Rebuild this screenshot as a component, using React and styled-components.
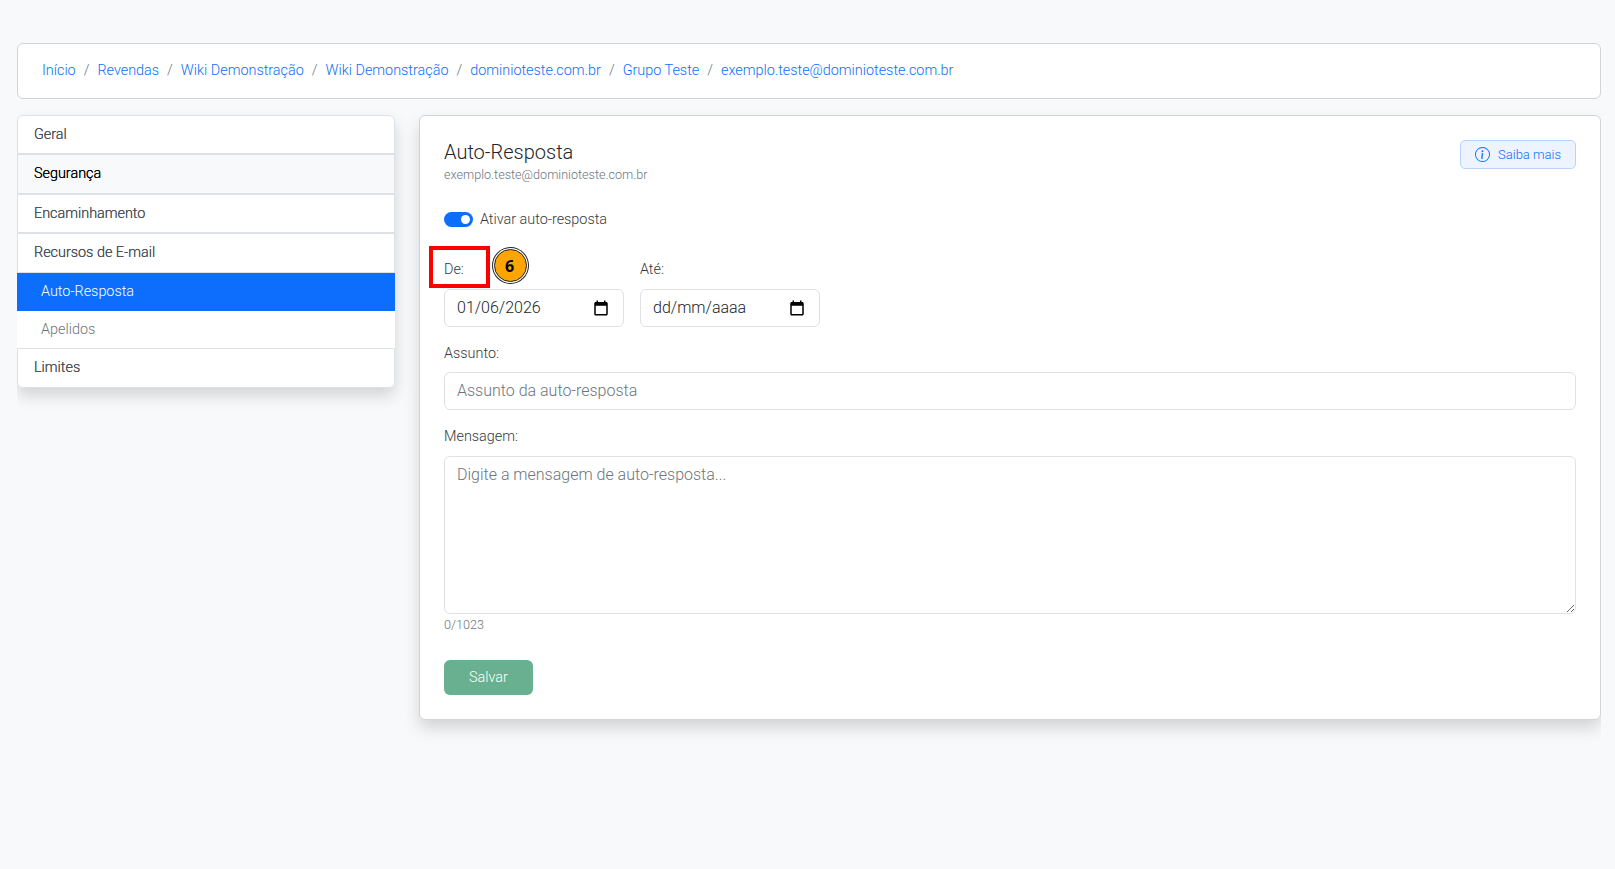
import styled, { createGlobalStyle } from "styled-components";
import { BsInfoCircle } from "react-icons/bs";

const GlobalStyle = createGlobalStyle`
  * {
    box-sizing: border-box;
  }
  body {
    margin: 0;
    background-color: #f8f9fa;
    color: #212529;
    font-family: Roboto, "Liberation Sans", sans-serif;
    font-size: 14.4px;
    line-height: 1.5;
    font-weight: 300;
  }
`;

const Page = styled.div`
  padding: 43px 14px 0 17px;
  min-height: 869px;
`;

const Breadcrumb = styled.nav`
  display: flex;
  align-items: center;
  padding: 16px 24px;
  margin-bottom: 16px;
  background: #fff;
  border: 1px solid #d3d4d5;
  border-radius: 6px;
`;

const Crumb = styled.a`
  color: #0d6efd;
  text-decoration: none;
`;

const CrumbSeparator = styled.span`
  padding: 0 8px;
  color: #6c757d;
`;

const Columns = styled.div`
  display: grid;
  grid-template-columns: 378px 1fr;
  gap: 24px;
  align-items: start;
  overflow-x: clip;
`;

const SideMenu = styled.ul`
  margin: 0;
  padding: 0;
  list-style: none;
  background: #fff;
  border-radius: 6px;
  box-shadow: 0 8px 16px rgba(0, 0, 0, 0.15);
`;

const MenuItem = styled.li`
  padding: 8px 16px;
  border: 1px solid #dee2e6;
  color: ${(props) => (props.$active ? "#000" : "#495057")};
  text-shadow: 0 0 0.6px ${(props) => (props.$active ? "#000" : "#495057")};
  background: ${(props) => (props.$active ? "#f8f9fa" : "#fff")};

  &:first-child {
    border-radius: 6px 6px 0 0;
  }
  &:last-child {
    border-radius: 0 0 6px 6px;
  }
`;

const SubItem = styled.li`
  padding: 8px 24px;
  color: ${(props) => (props.$active ? "#fff" : "#6c757d")};
  background: ${(props) => (props.$active ? "#0d6efd" : "#fff")};
`;

const Card = styled.section`
  padding: 24px;
  background: #fff;
  border: 1px solid #d3d4d5;
  border-radius: 6px;
  box-shadow: 0 8px 16px rgba(0, 0, 0, 0.15);
`;

const CardHeader = styled.header`
  display: flex;
  justify-content: space-between;
  align-items: flex-start;
  margin-bottom: 25px;
`;

const Title = styled.h2`
  margin: 0;
  font-size: 20px;
  font-weight: 300;
  line-height: 24px;
`;

const Subtitle = styled.div`
  font-size: 12.6px;
  line-height: 19px;
  margin-top: 1px;
  color: #6c757d;
`;

const LearnMore = styled.button`
  display: flex;
  align-items: center;
  gap: 8px;
  height: 29px;
  padding: 1px 14px 0;
  background: #edf4ff;
  border: 1px solid #b9d4fc;
  border-radius: 5px;
  color: #0d6efd;
  font: inherit;
  font-size: 13px;
`;

const SwitchRow = styled.label`
  display: flex;
  align-items: center;
  gap: 7px;
  margin-bottom: 29px;
  color: #343a40;
`;

const SwitchTrack = styled.span`
  display: flex;
  justify-content: flex-end;
  align-items: center;
  width: 29px;
  height: 14.4px;
  padding: 2px 3px;
  background: #0d6efd;
  border-radius: 8px;
`;

const SwitchKnob = styled.span`
  width: 9px;
  height: 9px;
  background: #fff;
  border-radius: 50%;
`;

const DateRow = styled.div`
  display: flex;
  gap: 16px;
  margin-bottom: 16px;
`;

const DateField = styled.div`
  position: relative;
  width: 180px;
`;

const FieldLabel = styled.label`
  display: block;
  margin-bottom: 8px;
  color: #343a40;
`;

const DateBox = styled.div`
  display: flex;
  justify-content: space-between;
  align-items: center;
  height: 38px;
  padding: 0 13px 0 12px;
  border: 1px solid #dee2e6;
  border-radius: 6px;
  font-size: 16px;
  color: #212529;
`;

const Highlight = styled.div`
  position: absolute;
  left: -15px;
  top: -13px;
  width: 61px;
  height: 42px;
  border: 4px solid #f00;
`;

const StepBadge = styled.div`
  position: absolute;
  left: 49.5px;
  top: -10px;
  display: flex;
  justify-content: center;
  align-items: center;
  width: 33px;
  height: 33px;
  padding-right: 1px;
  background: #ffa500;
  border: 1px solid #222;
  border-radius: 50%;
  box-shadow: 0 0 0 1px #fff, 0 0 0 2px #222;
  color: #000;
  font-family: "Open Sans", sans-serif;
  font-size: 16px;
  font-weight: 700;
`;

const Field = styled.div`
  margin-bottom: 16px;
`;

const TextInput = styled.input`
  display: block;
  width: 100%;
  height: 38px;
  padding: 5px 12px 7px;
  border: 1px solid #dee2e6;
  border-radius: 6px;
  font: inherit;
  font-size: 16px;
  outline: none;

  &::placeholder {
    color: #6c757d;
  }
`;

const TextArea = styled.textarea`
  display: block;
  width: 100%;
  height: 158px;
  padding: 6px 12px;
  border: 1px solid #dee2e6;
  border-radius: 6px;
  font: inherit;
  font-size: 16px;
  outline: none;

  &::placeholder {
    color: #6c757d;
  }
`;

const Counter = styled.div`
  margin-top: 2px;
  font-size: 12.6px;
  color: #6c757d;
`;

const SaveButton = styled.button`
  display: block;
  width: 89px;
  height: 35px;
  margin-top: 25px;
  background: #198754;
  opacity: 0.65;
  border: none;
  border-radius: 6px;
  color: #fff;
  font: inherit;
`;

const CalendarIcon = () => (
  <svg width="18" height="18" viewBox="0 0 24 24" fill="#000">
    <path d="M19 4h-1V2h-2v2H8V2H6v2H5c-1.1 0-2 .9-2 2v14c0 1.1.9 2 2 2h14c1.1 0 2-.9 2-2V6c0-1.1-.9-2-2-2zm0 16H5V9h14v11z" />
  </svg>
);

const crumbs = [
  "Início",
  "Revendas",
  "Wiki Demonstração",
  "Wiki Demonstração",
  "dominioteste.com.br",
  "Grupo Teste",
  "exemplo.teste@dominioteste.com.br",
];

export default function App() {
  return (
    <Page>
      <GlobalStyle />
      <Breadcrumb>
        {crumbs.map((crumb, i) => (
          <span key={i}>
            {i > 0 && <CrumbSeparator>/</CrumbSeparator>}
            <Crumb href="#">{crumb}</Crumb>
          </span>
        ))}
      </Breadcrumb>
      <Columns>
        <SideMenu>
          <MenuItem>Geral</MenuItem>
          <MenuItem $active>Segurança</MenuItem>
          <MenuItem>Encaminhamento</MenuItem>
          <MenuItem>Recursos de E-mail</MenuItem>
          <SubItem $active>Auto-Resposta</SubItem>
          <SubItem>Apelidos</SubItem>
          <MenuItem>Limites</MenuItem>
        </SideMenu>
        <Card>
          <CardHeader>
            <div>
              <Title>Auto-Resposta</Title>
              <Subtitle>exemplo.teste@dominioteste.com.br</Subtitle>
            </div>
            <LearnMore>
              <BsInfoCircle size={15} />
              Saiba mais
            </LearnMore>
          </CardHeader>
          <SwitchRow>
            <SwitchTrack>
              <SwitchKnob />
            </SwitchTrack>
            Ativar auto-resposta
          </SwitchRow>
          <DateRow>
            <DateField>
              <FieldLabel>De:</FieldLabel>
              <DateBox>
                01/06/2026
                <CalendarIcon />
              </DateBox>
              <Highlight />
              <StepBadge>6</StepBadge>
            </DateField>
            <DateField>
              <FieldLabel>Até:</FieldLabel>
              <DateBox>
                dd/mm/aaaa
                <CalendarIcon />
              </DateBox>
            </DateField>
          </DateRow>
          <Field>
            <FieldLabel>Assunto:</FieldLabel>
            <TextInput placeholder="Assunto da auto-resposta" />
          </Field>
          <FieldLabel>Mensagem:</FieldLabel>
          <TextArea placeholder="Digite a mensagem de auto-resposta..." />
          <Counter>0/1023</Counter>
          <SaveButton>Salvar</SaveButton>
        </Card>
      </Columns>
    </Page>
  );
}
